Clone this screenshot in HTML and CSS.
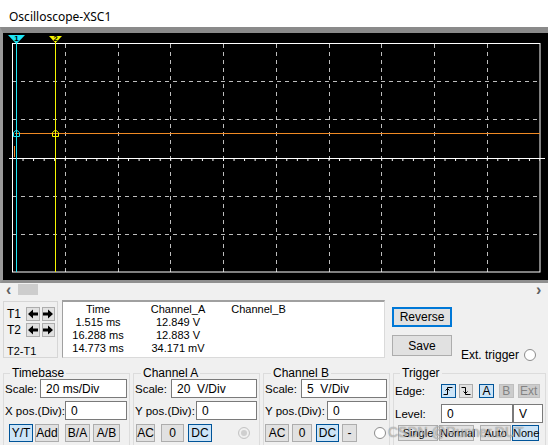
FILE: index.html
```html
<!DOCTYPE html>
<html lang="en">
<head>
    <meta charset="UTF-8">
    <title>Oscilloscope-XSC1</title>
    <link rel="stylesheet" href="styles.css">
</head>
<body>
    <div class="titlebar">Oscilloscope-XSC1</div>

    <div class="scope">
        <svg width="545" height="247" viewBox="3 33 545 247">
            <defs>
                <pattern id="ticks" patternUnits="userSpaceOnUse" x="12" y="159" width="10.55" height="3">
                    <line x1="0.5" y1="0" x2="0.5" y2="2" stroke="#fff" stroke-width="1"/>
                </pattern>
            </defs>
            <!-- grid -->
            <g stroke="#bdbdbd" stroke-width="1" stroke-dasharray="4 4">
                <line x1="65.5" y1="44" x2="65.5" y2="272"/>
                <line x1="118.5" y1="44" x2="118.5" y2="272"/>
                <line x1="170.5" y1="44" x2="170.5" y2="272"/>
                <line x1="223.5" y1="44" x2="223.5" y2="272"/>
                <line x1="276.5" y1="44" x2="276.5" y2="272"/>
                <line x1="329.5" y1="44" x2="329.5" y2="272"/>
                <line x1="381.5" y1="44" x2="381.5" y2="272"/>
                <line x1="434.5" y1="44" x2="434.5" y2="272"/>
                <line x1="487.5" y1="44" x2="487.5" y2="272"/>
                <line x1="13" y1="81.5" x2="540" y2="81.5"/>
                <line x1="13" y1="119.5" x2="540" y2="119.5"/>
                <line x1="13" y1="196.5" x2="540" y2="196.5"/>
                <line x1="13" y1="234.5" x2="540" y2="234.5"/>
            </g>
            <rect x="12.5" y="43.5" width="527.5" height="228.5" fill="none" stroke="#fff" stroke-width="1"/>
            <line x1="9" y1="158.5" x2="545" y2="158.5" stroke="#fff" stroke-width="1"/>
            <rect x="12" y="159" width="528" height="3" fill="url(#ticks)"/>

            <!-- trace -->
            <line x1="15" y1="133.5" x2="540" y2="133.5" stroke="#f08a24" stroke-width="1"/>
            <line x1="14.5" y1="146" x2="14.5" y2="157" stroke="#f08a24" stroke-width="1"/>

            <!-- cursors -->
            <line x1="16.5" y1="36" x2="16.5" y2="272" stroke="#1ee5f5" stroke-width="1"/>
            <line x1="55.5" y1="36" x2="55.5" y2="272" stroke="#f5f500" stroke-width="1"/>
            <polygon points="8,35 25,35 16.5,44" fill="#1ee5f5"/>
            <text x="16.5" y="41" class="mk">1</text>
            <polygon points="49,36 62,36 55.5,43" fill="#f5f500"/>
            <text x="55.5" y="41" class="mk">2</text>
            <polygon points="13.5,136.5 13.5,132.5 16.5,130 19.5,132.5 19.5,136.5" fill="none" stroke="#1ee5f5"/>
            <polygon points="52.5,136.5 52.5,132.5 55.5,130 58.5,132.5 58.5,136.5" fill="none" stroke="#f5f500"/>
        </svg>
    </div>

    <div class="hscroll">
        <span class="chev">&#x2039;</span>
        <span class="thumb"></span>
        <span class="chev right">&#x203A;</span>
    </div>

    <div class="readout-row">
        <div class="cursors">
            <div class="crow">
                <span class="tlabel">T1</span>
                <button class="arrow"><svg width="10" height="10" viewBox="0 0 10 10"><polygon points="0,5 5,0.5 5,3.5 10,3.5 10,6.5 5,6.5 5,9.5"/></svg></button>
                <button class="arrow"><svg width="10" height="10" viewBox="0 0 10 10"><polygon points="10,5 5,0.5 5,3.5 0,3.5 0,6.5 5,6.5 5,9.5"/></svg></button>
            </div>
            <div class="crow">
                <span class="tlabel">T2</span>
                <button class="arrow"><svg width="10" height="10" viewBox="0 0 10 10"><polygon points="0,5 5,0.5 5,3.5 10,3.5 10,6.5 5,6.5 5,9.5"/></svg></button>
                <button class="arrow"><svg width="10" height="10" viewBox="0 0 10 10"><polygon points="10,5 5,0.5 5,3.5 0,3.5 0,6.5 5,6.5 5,9.5"/></svg></button>
            </div>
            <div class="crow diff">T2-T1</div>
        </div>

        <div class="readout">
            <span>Time</span><span>Channel_A</span><span>Channel_B</span>
            <span>1.515 ms</span><span>12.849 V</span><span></span>
            <span>16.288 ms</span><span>12.883 V</span><span></span>
            <span>14.773 ms</span><span>34.171 mV</span><span></span>
        </div>

        <div class="actions">
            <button class="btn focus">Reverse</button>
            <button class="btn">Save</button>
        </div>

        <div class="ext">
            Ext. trigger <span class="radio"></span>
        </div>
    </div>

    <div class="controls">
        <fieldset class="group timebase">
            <legend>Timebase</legend>
            <div class="row">
                <label>Scale:</label>
                <input class="in w87" value="20 ms/Div">
            </div>
            <div class="row">
                <label>X pos.(Div):</label>
                <input class="in w62" value="0">
            </div>
            <div class="btnrow tb">
                <button class="sb on w24">Y/T</button>
                <button class="sb w24 g2">Add</button>
                <button class="sb w25 g6">B/A</button>
                <button class="sb w27 g3">A/B</button>
            </div>
        </fieldset>

        <fieldset class="group chan">
            <legend>Channel A</legend>
            <div class="row">
                <label>Scale:</label>
                <input class="in w86" value="20  V/Div">
            </div>
            <div class="row">
                <label>Y pos.(Div):</label>
                <input class="in w61" value="0">
            </div>
            <div class="btnrow ca">
                <button class="sb w19">AC</button>
                <button class="sb w23 g6">0</button>
                <button class="sb on w24 g4">DC</button>
                <span class="radio dim"></span>
            </div>
        </fieldset>

        <fieldset class="group chan">
            <legend>Channel B</legend>
            <div class="row">
                <label>Scale:</label>
                <input class="in w86" value="5  V/Div">
            </div>
            <div class="row">
                <label>Y pos.(Div):</label>
                <input class="in w60" value="0">
            </div>
            <div class="btnrow cb">
                <button class="sb w24">AC</button>
                <button class="sb w20 g3">0</button>
                <button class="sb on w23 g4">DC</button>
                <button class="sb w15 g3">-</button>
                <span class="radio end"></span>
            </div>
        </fieldset>

        <fieldset class="group trigger">
            <legend>Trigger</legend>
            <div class="row edge">
                <label>Edge:</label>
                <button class="eb on"><svg width="10" height="10" viewBox="0 0 10 10"><path d="M0.5 8.5H4.5V1.5H9.5M2.5 4.5L4.5 2.5L6.5 4.5" fill="none" stroke="#000"/></svg></button>
                <button class="eb"><svg width="10" height="10" viewBox="0 0 10 10"><path d="M0.5 1.5H4.5V8.5H9.5M2.5 5.5L4.5 7.5L6.5 5.5" fill="none" stroke="#000"/></svg></button>
                <button class="eb on src">A</button>
                <button class="eb off src">B</button>
                <button class="eb off ext-src">Ext</button>
            </div>
            <div class="row level">
                <label>Level:</label>
                <input class="in w72" value="0">
                <input class="in unit" value="V">
            </div>
            <div class="btnrow mode">
                <button class="sb w40">Single</button>
                <button class="sb w35 g1">Normal</button>
                <button class="sb w31 g6">Auto</button>
                <button class="sb on w27 g1">None</button>
            </div>
        </fieldset>
    </div>

    <div class="watermark">CSDN @Runner.DUT</div>
</body>
</html>
```
FILE: styles.css
```css
* {
    box-sizing: border-box;
}
body {
    margin: 0;
    width: 548px;
    height: 445px;
    overflow: hidden;
    position: relative;
    background: #f0f0f0;
    font-family: "Liberation Sans", Arial, sans-serif;
    font-size: 11px;
    color: #000;
}
button, input {
    font-family: "Liberation Sans", Arial, sans-serif;
    font-size: 11px;
    color: #000;
    margin: 0;
}

.titlebar {
    height: 27px;
    background: #fff;
    padding: 7px 0 0 9px;
    font-family: "Noto Sans", sans-serif;
    font-size: 12px;
    line-height: 20px;
}

.scope {
    height: 256px;
    background: #000;
    border-top: 6px solid #8a8a8a;
    border-left: 3px solid #9a9a9a;
    border-bottom: 3px solid #8f8f8f;
}
.scope svg {
    display: block;
}
.mk {
    font-family: "Liberation Sans", sans-serif;
    font-size: 8px;
    font-weight: bold;
    text-anchor: middle;
    fill: #000;
}

.hscroll {
    height: 13px;
    display: flex;
    align-items: center;
}
.chev {
    color: #606060;
    font-size: 16px;
    font-weight: bold;
    line-height: 13px;
    margin-left: 6px;
    width: 12px;
}
.chev.right {
    margin-left: auto;
}
.thumb {
    width: 20px;
    height: 11px;
    background: #cdcdcd;
}

.readout-row {
    display: flex;
    padding: 4px 0 0 3px;
    height: 70px;
}
.cursors {
    width: 55px;
    height: 57px;
    margin-top: 1px;
    border: 1px solid #d6d6d6;
    padding: 4px 0 0 3px;
}
.crow {
    display: flex;
    align-items: center;
    height: 16px;
    font-size: 12px;
}
.tlabel {
    width: 20px;
}
.crow.diff {
    margin-top: 6px;
    height: 14px;
    font-size: 11px;
}
.arrow {
    width: 14px;
    height: 14px;
    padding: 0;
    margin-right: 2px;
    background: #e1e1e1;
    border: 1px solid #adadad;
    display: flex;
    align-items: center;
    justify-content: center;
}
.arrow svg {
    fill: #000;
}

.readout {
    width: 323px;
    height: 58px;
    margin-left: 4px;
    background: #fff;
    border: 1px solid #dadada;
    border-top: 2px solid #a0a0a0;
    border-left: 1px solid #a0a0a0;
    padding-top: 1px;
    display: grid;
    grid-template-columns: 70px 90px 71px;
    grid-auto-rows: 13px;
    line-height: 13px;
    text-align: center;
}

.actions {
    display: flex;
    flex-direction: column;
    gap: 8px;
    margin: 7px 0 0 7px;
    width: 60px;
}
.btn {
    height: 21px;
    background: #e1e1e1;
    border: 1px solid #adadad;
    padding: 0;
    font-size: 12px;
}
.btn.focus {
    border: 2px solid #0078d7;
    height: 20px;
}

.ext {
    margin: 48px 0 0 9px;
    height: 14px;
    line-height: 14px;
    font-size: 12px;
    display: flex;
    align-items: center;
    gap: 5px;
    white-space: nowrap;
}
.radio {
    display: inline-block;
    width: 12px;
    height: 12px;
    border-radius: 50%;
    background: #fff;
    border: 1px solid #8c8c8c;
    flex: none;
}
.radio.dim {
    margin-left: auto;
    margin-right: 7px;
    background: #f0f0f0;
    border-color: #c4c4c4;
    box-shadow: inset 0 0 0 2px #f0f0f0, inset 0 0 0 6px #cfcfcf;
}
.radio.end {
    margin-left: auto;
    margin-right: 1px;
}

.controls {
    display: flex;
    padding-left: 3px;
}
.group {
    margin: 0 3px 0 0;
    padding: 0 2px 0 1px;
    border: 1px solid #dcdcdc;
    height: 82px;
    min-width: 0;
}
.group legend {
    padding: 0 2px;
    margin-left: 5px;
    line-height: 14px;
    font-size: 12px;
}
.timebase { width: 127px; }
.chan { width: 127px; }
.chan legend { margin-left: 6px; }
.trigger { width: 153px; margin-right: 0; }

.row {
    display: flex;
    align-items: center;
    justify-content: space-between;
    height: 19px;
    margin-top: 3px;
    font-size: 11.5px;
    white-space: nowrap;
}
.row:first-of-type {
    margin-top: -1px;
}
.in {
    height: 19px;
    border: 1px solid #7a7a7a;
    background: #fff;
    padding: 0 0 0 5px;
    font-size: 12px;
    flex: none;
}
.w87 { width: 87px; }
.w86 { width: 86px; }
.w62 { width: 62px; }
.w61 { width: 61px; }
.w60 { width: 60px; }
.w72 { width: 72px; margin-left: auto; }
.unit {
    width: 30px;
}

.btnrow {
    display: flex;
    align-items: center;
    margin-top: 4px;
    height: 18px;
}
.btnrow.tb { padding-left: 4px; }
.btnrow.ca { padding-left: 1px; }
.btnrow.cb { padding-left: 0; }
.sb {
    height: 18px;
    padding: 0;
    background: #e1e1e1;
    border: 1px solid #adadad;
    font-size: 12px;
    flex: none;
    white-space: nowrap;
}
.sb.on {
    background: #cce4f7;
    border-color: #005499;
}
.g1 { margin-left: 1px; }
.g2 { margin-left: 2px; }
.g3 { margin-left: 3px; }
.g4 { margin-left: 4px; }
.g6 { margin-left: 6px; }
.w15 { width: 15px; }
.w19 { width: 19px; }
.w20 { width: 20px; }
.w23 { width: 23px; }
.w24 { width: 24px; }
.w25 { width: 25px; }
.w27 { width: 27px; }
.w31 { width: 31px; }
.w35 { width: 35px; }
.w40 { width: 40px; }

.row.edge {
    justify-content: flex-start;
    align-items: flex-end;
}
.row.edge label {
    width: 47px;
    line-height: 14px;
}
.eb {
    height: 14px;
    width: 15px;
    padding: 0;
    margin-right: 3px;
    background: #e1e1e1;
    border: 1px solid #adadad;
    display: flex;
    align-items: center;
    justify-content: center;
    font-size: 12px;
}
.eb.on {
    background: #cce4f7;
    border-color: #005499;
}
.eb.src {
    margin-left: 3px;
    margin-right: 2px;
}
.eb.off {
    background: #cccccc;
    border-color: #bfbfbf;
    color: #838383;
}
.eb.ext-src {
    width: 23px;
    margin-left: 2px;
}
.row.level {
    justify-content: flex-start;
    margin-top: 6px;
}
.btnrow.mode {
    margin-top: 1px;
    padding-left: 3px;
}
.mode .sb {
    height: 16px;
    font-size: 11px;
}

.watermark {
    position: absolute;
    left: 388px;
    top: 424px;
    font-size: 14px;
    color: rgba(255, 255, 255, 0.55);
    text-shadow: 0 0 1px rgba(0, 0, 0, 0.6);
    white-space: nowrap;
}
```
